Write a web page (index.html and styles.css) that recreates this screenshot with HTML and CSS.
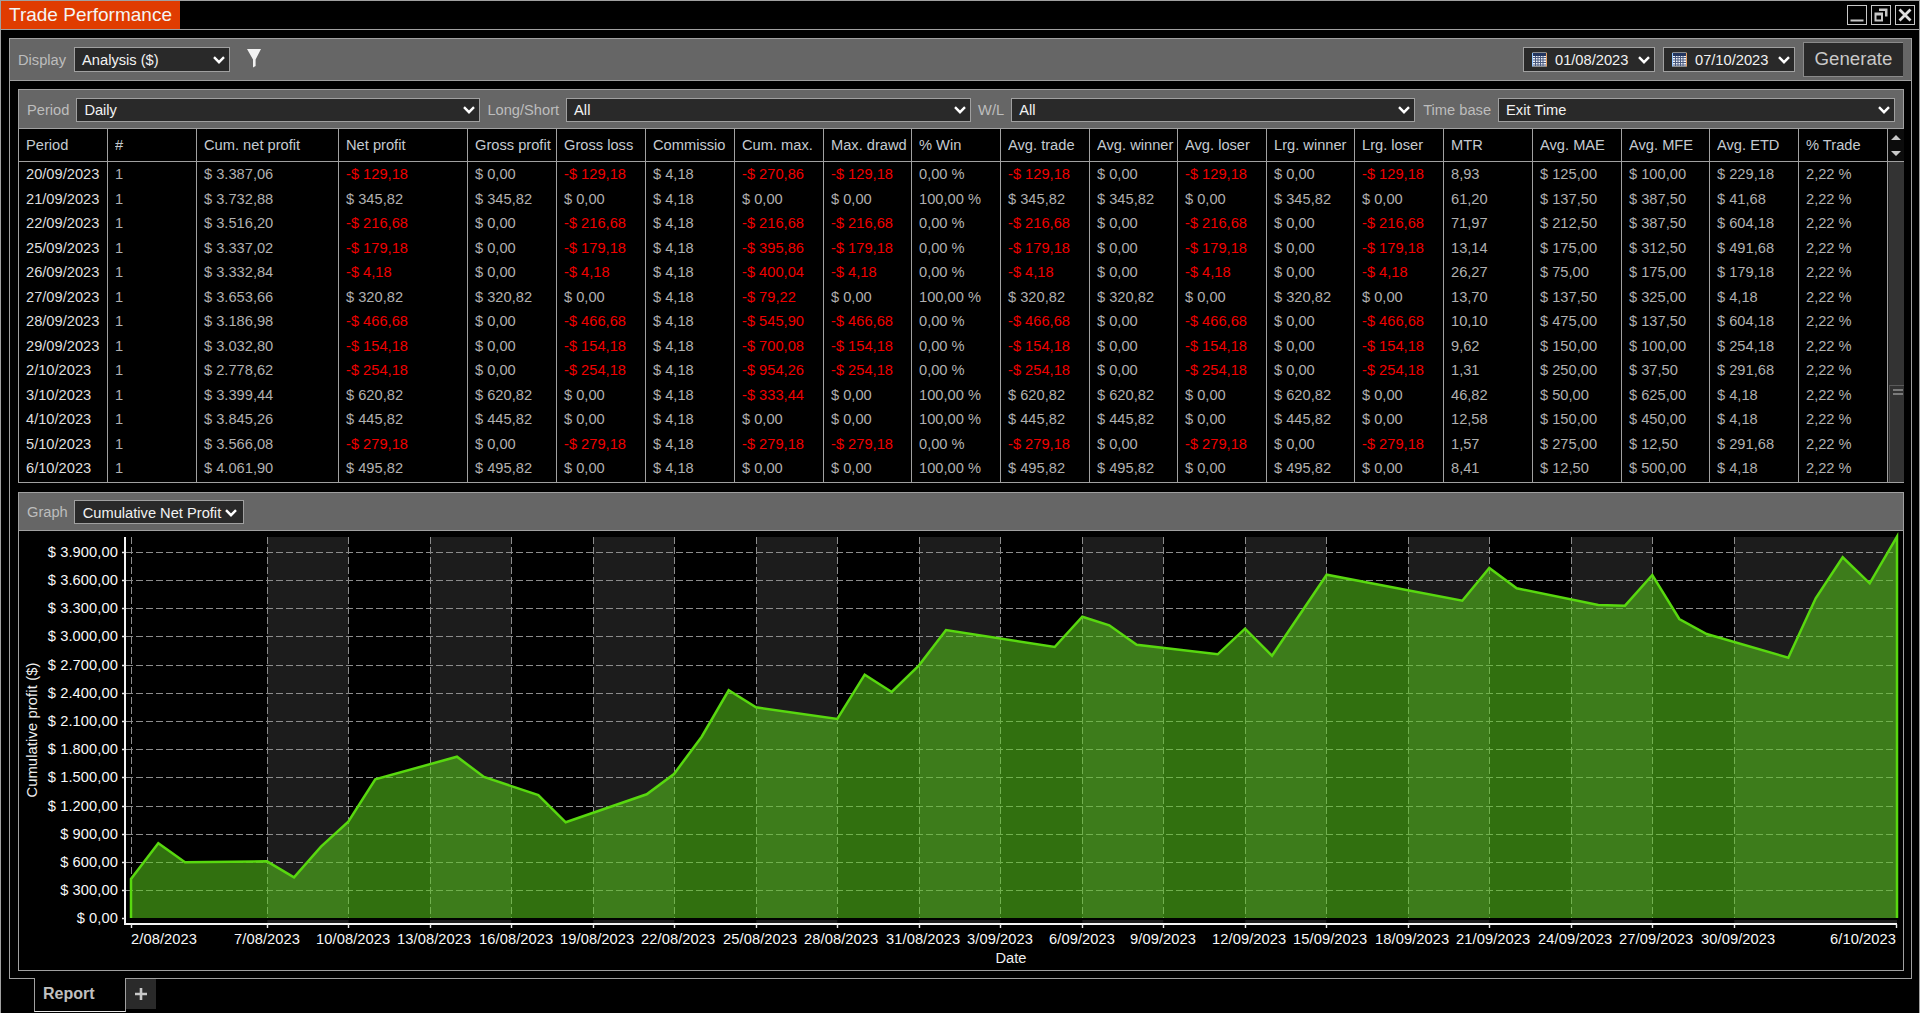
FILE: index.html
```html
<!DOCTYPE html>
<html lang="en">
<head>
<meta charset="utf-8">
<title>Trade Performance</title>
<link rel="stylesheet" href="styles.css">
</head>
<body>
<div class="window">
  <header class="titlebar">
    <div class="title">Trade Performance</div>
    <div class="winbtns">
      <span class="winbtn"><svg width="18" height="18" viewBox="0 0 18 18"><rect x="2.5" y="13.5" width="13" height="2" fill="#c8c8c8"/></svg></span>
      <span class="winbtn"><svg width="18" height="18" viewBox="0 0 18 18"><path d="M7 2.5h8.5v8H13V5H7z" fill="#c8c8c8"/><path fill-rule="evenodd" d="M2.5 6.5H11v9H2.5zM4.5 9.5v4H9v-4z" fill="#c8c8c8"/></svg></span>
      <span class="winbtn"><svg width="18" height="18" viewBox="0 0 18 18"><path d="M3.5 3.5l11 11M14.5 3.5l-11 11" stroke="#e0e0e0" stroke-width="2.8" fill="none"/></svg></span>
    </div>
  </header>
  <main class="outer">
    <div class="toolbar">
      <span class="lbl">Display</span>
      <div class="sel sel-display"><span>Analysis ($)</span><svg class="chev" viewBox="0 0 12 8"><path d="M1 1.2l5 5 5-5"/></svg></div>
      <svg class="funnel" width="16" height="20" viewBox="0 0 16 20"><path d="M1 1h14L9.6 11.5V18L7 19.5V11.5z" fill="#f2f2f2"/></svg>
      <div class="spacer"></div>
      <div class="sel sel-date">
        <svg class="cal" width="15" height="15" viewBox="0 0 15 15"><rect x=".5" y=".5" width="14" height="14" fill="#eef1f6"/><rect x="1" y="1" width="13" height="3" fill="#24365f"/><path d="M1 5.5h13M1 8h13M1 10.5h13M1 13h13M3.5 4v10M6 4v10M8.5 4v10M11 4v10" stroke="#4a5a80" stroke-width="1"/><path d="M.5 1v13.5" stroke="#8fc5ff"/><path d="M14.5 1v13.5" stroke="#e8a060"/></svg>
        <span>01/08/2023</span><svg class="chev" viewBox="0 0 12 8"><path d="M1 1.2l5 5 5-5"/></svg>
      </div>
      <div class="sel sel-date">
        <svg class="cal" width="15" height="15" viewBox="0 0 15 15"><rect x=".5" y=".5" width="14" height="14" fill="#eef1f6"/><rect x="1" y="1" width="13" height="3" fill="#24365f"/><path d="M1 5.5h13M1 8h13M1 10.5h13M1 13h13M3.5 4v10M6 4v10M8.5 4v10M11 4v10" stroke="#4a5a80" stroke-width="1"/><path d="M.5 1v13.5" stroke="#8fc5ff"/><path d="M14.5 1v13.5" stroke="#e8a060"/></svg>
        <span>07/10/2023</span><svg class="chev" viewBox="0 0 12 8"><path d="M1 1.2l5 5 5-5"/></svg>
      </div>
      <div class="generate">Generate</div>
    </div>
    <div class="content">
      <section class="panel panel-table">
        <div class="bar filterbar">
          <span class="lbl">Period</span>
          <div class="sel sel-f1"><span>Daily</span><svg class="chev" viewBox="0 0 12 8"><path d="M1 1.2l5 5 5-5"/></svg></div>
          <span class="lbl">Long/Short</span>
          <div class="sel sel-f2"><span>All</span><svg class="chev" viewBox="0 0 12 8"><path d="M1 1.2l5 5 5-5"/></svg></div>
          <span class="lbl">W/L</span>
          <div class="sel sel-f3"><span>All</span><svg class="chev" viewBox="0 0 12 8"><path d="M1 1.2l5 5 5-5"/></svg></div>
          <span class="lbl">Time base</span>
          <div class="sel sel-f4"><span>Exit Time</span><svg class="chev" viewBox="0 0 12 8"><path d="M1 1.2l5 5 5-5"/></svg></div>
        </div>
        <div class="tablewrap">
          <div class="grid">
            <div class="h"><span>Period</span></div><div class="h"><span>#</span></div><div class="h"><span>Cum. net profit</span></div><div class="h"><span>Net profit</span></div><div class="h"><span>Gross profit</span></div><div class="h"><span>Gross loss</span></div><div class="h"><span>Commissio</span></div><div class="h"><span>Cum. max.</span></div><div class="h"><span>Max. drawd</span></div><div class="h"><span>% Win</span></div><div class="h"><span>Avg. trade</span></div><div class="h"><span>Avg. winner</span></div><div class="h"><span>Avg. loser</span></div><div class="h"><span>Lrg. winner</span></div><div class="h"><span>Lrg. loser</span></div><div class="h"><span>MTR</span></div><div class="h"><span>Avg. MAE</span></div><div class="h"><span>Avg. MFE</span></div><div class="h"><span>Avg. ETD</span></div><div class="h"><span>% Trade</span></div>

            <div class="c d">20/09/2023</div><div class="c">1</div><div class="c">$ 3.387,06</div><div class="c n">-$ 129,18</div><div class="c">$ 0,00</div><div class="c n">-$ 129,18</div><div class="c">$ 4,18</div><div class="c n">-$ 270,86</div><div class="c n">-$ 129,18</div><div class="c">0,00 %</div><div class="c n">-$ 129,18</div><div class="c">$ 0,00</div><div class="c n">-$ 129,18</div><div class="c">$ 0,00</div><div class="c n">-$ 129,18</div><div class="c">8,93</div><div class="c">$ 125,00</div><div class="c">$ 100,00</div><div class="c">$ 229,18</div><div class="c">2,22 %</div>

            <div class="c d">21/09/2023</div><div class="c">1</div><div class="c">$ 3.732,88</div><div class="c">$ 345,82</div><div class="c">$ 345,82</div><div class="c">$ 0,00</div><div class="c">$ 4,18</div><div class="c">$ 0,00</div><div class="c">$ 0,00</div><div class="c">100,00 %</div><div class="c">$ 345,82</div><div class="c">$ 345,82</div><div class="c">$ 0,00</div><div class="c">$ 345,82</div><div class="c">$ 0,00</div><div class="c">61,20</div><div class="c">$ 137,50</div><div class="c">$ 387,50</div><div class="c">$ 41,68</div><div class="c">2,22 %</div>

            <div class="c d">22/09/2023</div><div class="c">1</div><div class="c">$ 3.516,20</div><div class="c n">-$ 216,68</div><div class="c">$ 0,00</div><div class="c n">-$ 216,68</div><div class="c">$ 4,18</div><div class="c n">-$ 216,68</div><div class="c n">-$ 216,68</div><div class="c">0,00 %</div><div class="c n">-$ 216,68</div><div class="c">$ 0,00</div><div class="c n">-$ 216,68</div><div class="c">$ 0,00</div><div class="c n">-$ 216,68</div><div class="c">71,97</div><div class="c">$ 212,50</div><div class="c">$ 387,50</div><div class="c">$ 604,18</div><div class="c">2,22 %</div>

            <div class="c d">25/09/2023</div><div class="c">1</div><div class="c">$ 3.337,02</div><div class="c n">-$ 179,18</div><div class="c">$ 0,00</div><div class="c n">-$ 179,18</div><div class="c">$ 4,18</div><div class="c n">-$ 395,86</div><div class="c n">-$ 179,18</div><div class="c">0,00 %</div><div class="c n">-$ 179,18</div><div class="c">$ 0,00</div><div class="c n">-$ 179,18</div><div class="c">$ 0,00</div><div class="c n">-$ 179,18</div><div class="c">13,14</div><div class="c">$ 175,00</div><div class="c">$ 312,50</div><div class="c">$ 491,68</div><div class="c">2,22 %</div>

            <div class="c d">26/09/2023</div><div class="c">1</div><div class="c">$ 3.332,84</div><div class="c n">-$ 4,18</div><div class="c">$ 0,00</div><div class="c n">-$ 4,18</div><div class="c">$ 4,18</div><div class="c n">-$ 400,04</div><div class="c n">-$ 4,18</div><div class="c">0,00 %</div><div class="c n">-$ 4,18</div><div class="c">$ 0,00</div><div class="c n">-$ 4,18</div><div class="c">$ 0,00</div><div class="c n">-$ 4,18</div><div class="c">26,27</div><div class="c">$ 75,00</div><div class="c">$ 175,00</div><div class="c">$ 179,18</div><div class="c">2,22 %</div>

            <div class="c d">27/09/2023</div><div class="c">1</div><div class="c">$ 3.653,66</div><div class="c">$ 320,82</div><div class="c">$ 320,82</div><div class="c">$ 0,00</div><div class="c">$ 4,18</div><div class="c n">-$ 79,22</div><div class="c">$ 0,00</div><div class="c">100,00 %</div><div class="c">$ 320,82</div><div class="c">$ 320,82</div><div class="c">$ 0,00</div><div class="c">$ 320,82</div><div class="c">$ 0,00</div><div class="c">13,70</div><div class="c">$ 137,50</div><div class="c">$ 325,00</div><div class="c">$ 4,18</div><div class="c">2,22 %</div>

            <div class="c d">28/09/2023</div><div class="c">1</div><div class="c">$ 3.186,98</div><div class="c n">-$ 466,68</div><div class="c">$ 0,00</div><div class="c n">-$ 466,68</div><div class="c">$ 4,18</div><div class="c n">-$ 545,90</div><div class="c n">-$ 466,68</div><div class="c">0,00 %</div><div class="c n">-$ 466,68</div><div class="c">$ 0,00</div><div class="c n">-$ 466,68</div><div class="c">$ 0,00</div><div class="c n">-$ 466,68</div><div class="c">10,10</div><div class="c">$ 475,00</div><div class="c">$ 137,50</div><div class="c">$ 604,18</div><div class="c">2,22 %</div>

            <div class="c d">29/09/2023</div><div class="c">1</div><div class="c">$ 3.032,80</div><div class="c n">-$ 154,18</div><div class="c">$ 0,00</div><div class="c n">-$ 154,18</div><div class="c">$ 4,18</div><div class="c n">-$ 700,08</div><div class="c n">-$ 154,18</div><div class="c">0,00 %</div><div class="c n">-$ 154,18</div><div class="c">$ 0,00</div><div class="c n">-$ 154,18</div><div class="c">$ 0,00</div><div class="c n">-$ 154,18</div><div class="c">9,62</div><div class="c">$ 150,00</div><div class="c">$ 100,00</div><div class="c">$ 254,18</div><div class="c">2,22 %</div>

            <div class="c d">2/10/2023</div><div class="c">1</div><div class="c">$ 2.778,62</div><div class="c n">-$ 254,18</div><div class="c">$ 0,00</div><div class="c n">-$ 254,18</div><div class="c">$ 4,18</div><div class="c n">-$ 954,26</div><div class="c n">-$ 254,18</div><div class="c">0,00 %</div><div class="c n">-$ 254,18</div><div class="c">$ 0,00</div><div class="c n">-$ 254,18</div><div class="c">$ 0,00</div><div class="c n">-$ 254,18</div><div class="c">1,31</div><div class="c">$ 250,00</div><div class="c">$ 37,50</div><div class="c">$ 291,68</div><div class="c">2,22 %</div>

            <div class="c d">3/10/2023</div><div class="c">1</div><div class="c">$ 3.399,44</div><div class="c">$ 620,82</div><div class="c">$ 620,82</div><div class="c">$ 0,00</div><div class="c">$ 4,18</div><div class="c n">-$ 333,44</div><div class="c">$ 0,00</div><div class="c">100,00 %</div><div class="c">$ 620,82</div><div class="c">$ 620,82</div><div class="c">$ 0,00</div><div class="c">$ 620,82</div><div class="c">$ 0,00</div><div class="c">46,82</div><div class="c">$ 50,00</div><div class="c">$ 625,00</div><div class="c">$ 4,18</div><div class="c">2,22 %</div>

            <div class="c d">4/10/2023</div><div class="c">1</div><div class="c">$ 3.845,26</div><div class="c">$ 445,82</div><div class="c">$ 445,82</div><div class="c">$ 0,00</div><div class="c">$ 4,18</div><div class="c">$ 0,00</div><div class="c">$ 0,00</div><div class="c">100,00 %</div><div class="c">$ 445,82</div><div class="c">$ 445,82</div><div class="c">$ 0,00</div><div class="c">$ 445,82</div><div class="c">$ 0,00</div><div class="c">12,58</div><div class="c">$ 150,00</div><div class="c">$ 450,00</div><div class="c">$ 4,18</div><div class="c">2,22 %</div>

            <div class="c d">5/10/2023</div><div class="c">1</div><div class="c">$ 3.566,08</div><div class="c n">-$ 279,18</div><div class="c">$ 0,00</div><div class="c n">-$ 279,18</div><div class="c">$ 4,18</div><div class="c n">-$ 279,18</div><div class="c n">-$ 279,18</div><div class="c">0,00 %</div><div class="c n">-$ 279,18</div><div class="c">$ 0,00</div><div class="c n">-$ 279,18</div><div class="c">$ 0,00</div><div class="c n">-$ 279,18</div><div class="c">1,57</div><div class="c">$ 275,00</div><div class="c">$ 12,50</div><div class="c">$ 291,68</div><div class="c">2,22 %</div>

            <div class="c d">6/10/2023</div><div class="c">1</div><div class="c">$ 4.061,90</div><div class="c">$ 495,82</div><div class="c">$ 495,82</div><div class="c">$ 0,00</div><div class="c">$ 4,18</div><div class="c">$ 0,00</div><div class="c">$ 0,00</div><div class="c">100,00 %</div><div class="c">$ 495,82</div><div class="c">$ 495,82</div><div class="c">$ 0,00</div><div class="c">$ 495,82</div><div class="c">$ 0,00</div><div class="c">8,41</div><div class="c">$ 12,50</div><div class="c">$ 500,00</div><div class="c">$ 4,18</div><div class="c">2,22 %</div>
          </div>
          <div class="scroll">
            <div class="scroll-btns">
              <svg width="16" height="32" viewBox="0 0 16 32"><path d="M3 11l5-5 5 5zM3 22h10l-5 5z" fill="#c8c8c8"/></svg>
            </div>
            <div class="scroll-track"><div class="scroll-thumb"><i></i><i></i></div></div>
          </div>
        </div>
      </section>
      <section class="panel panel-graph">
        <div class="bar graphbar">
          <span class="lbl">Graph</span>
          <div class="sel sel-graph"><span>Cumulative Net Profit</span><svg class="chev" viewBox="0 0 12 8"><path d="M1 1.2l5 5 5-5"/></svg></div>
        </div>
        <svg class="chart" width="1884" height="439" viewBox="19 531 1884 439">
          <g class="bands">
            <rect x="267.3" y="537" width="81.2" height="386"/><rect x="430" y="537" width="81.3" height="386"/><rect x="593.3" y="537" width="81" height="386"/><rect x="756.3" y="537" width="81" height="386"/><rect x="919.3" y="537" width="81" height="386"/><rect x="1082.3" y="537" width="81" height="386"/><rect x="1245.3" y="537" width="81" height="386"/><rect x="1408.3" y="537" width="81" height="386"/><rect x="1571.3" y="537" width="81" height="386"/><rect x="1734.3" y="537" width="162.7" height="386"/>
          </g>
          <path class="gridl" d="M126 552.5H1897M126 580.5H1897M126 608.5H1897M126 636.5H1897M126 665.5H1897M126 693.5H1897M126 721.5H1897M126 749.5H1897M126 777.5H1897M126 806.5H1897M126 834.5H1897M126 862.5H1897M126 890.5H1897"/>
          <path class="gridl" d="M131.5 537V918M267.5 537V918M348.5 537V918M430.5 537V918M511.5 537V918M593.5 537V918M674.5 537V918M756.5 537V918M837.5 537V918M919.5 537V918M1000.5 537V918M1082.5 537V918M1163.5 537V918M1245.5 537V918M1326.5 537V918M1408.5 537V918M1489.5 537V918M1571.5 537V918M1652.5 537V918M1734.5 537V918"/>
          <rect class="gap" x="130" y="918" width="1767" height="2"/>
          <polygon class="fill" points="131,918 131,879 158.3,843.3 185,862.3 267,861.3 294,877.3 321,846.7 348.3,821.7 375.3,779.3 457,756.7 484,777 538.3,795 565.7,822.3 646.7,794.3 674,774 701.7,736.7 728.7,690.3 756,707.3 837.3,719 864.7,674.7 891.7,692 919,665.3 946,630 1054.7,647 1082.3,616.7 1109.3,625.3 1136.7,644.7 1217.7,654.3 1245,628.7 1272,655.7 1326.7,574.7 1462.3,600.7 1489.3,568 1516.7,588.3 1598.3,605 1625,605.7 1652.3,575 1679.3,619 1706.7,634 1788.3,657.7 1815.7,598.3 1842.7,557.3 1869.7,583.3 1897,536.7 1897,918"/>
          <polyline class="line" points="131,918 131,879 158.3,843.3 185,862.3 267,861.3 294,877.3 321,846.7 348.3,821.7 375.3,779.3 457,756.7 484,777 538.3,795 565.7,822.3 646.7,794.3 674,774 701.7,736.7 728.7,690.3 756,707.3 837.3,719 864.7,674.7 891.7,692 919,665.3 946,630 1054.7,647 1082.3,616.7 1109.3,625.3 1136.7,644.7 1217.7,654.3 1245,628.7 1272,655.7 1326.7,574.7 1462.3,600.7 1489.3,568 1516.7,588.3 1598.3,605 1625,605.7 1652.3,575 1679.3,619 1706.7,634 1788.3,657.7 1815.7,598.3 1842.7,557.3 1869.7,583.3 1897,536.7 1897,918"/>
          <path class="axis" d="M125 537V924H1897"/>
          <path class="tick" d="M122 552.5h3M122 580.5h3M122 608.5h3M122 636.5h3M122 665.5h3M122 693.5h3M122 721.5h3M122 749.5h3M122 777.5h3M122 806.5h3M122 834.5h3M122 862.5h3M122 890.5h3M122 918.5h3"/>
          <path class="tick" d="M131.5 924v4M267.5 924v4M348.5 924v4M430.5 924v4M511.5 924v4M593.5 924v4M674.5 924v4M756.5 924v4M837.5 924v4M919.5 924v4M1000.5 924v4M1082.5 924v4M1163.5 924v4M1245.5 924v4M1326.5 924v4M1408.5 924v4M1489.5 924v4M1571.5 924v4M1652.5 924v4M1734.5 924v4M1896.5 924v4"/>
          <g class="ylab">
            <text x="118" y="557">$ 3.900,00</text><text x="118" y="585">$ 3.600,00</text><text x="118" y="613">$ 3.300,00</text><text x="118" y="641">$ 3.000,00</text><text x="118" y="670">$ 2.700,00</text><text x="118" y="698">$ 2.400,00</text><text x="118" y="726">$ 2.100,00</text><text x="118" y="754">$ 1.800,00</text><text x="118" y="782">$ 1.500,00</text><text x="118" y="811">$ 1.200,00</text><text x="118" y="839">$ 900,00</text><text x="118" y="867">$ 600,00</text><text x="118" y="895">$ 300,00</text><text x="118" y="923">$ 0,00</text>
          </g>
          <g class="xlab">
            <text x="131" y="944">2/08/2023</text><text x="234" y="944">7/08/2023</text><text x="316" y="944">10/08/2023</text><text x="397" y="944">13/08/2023</text><text x="479" y="944">16/08/2023</text><text x="560" y="944">19/08/2023</text><text x="641" y="944">22/08/2023</text><text x="723" y="944">25/08/2023</text><text x="804" y="944">28/08/2023</text><text x="886" y="944">31/08/2023</text><text x="967" y="944">3/09/2023</text><text x="1049" y="944">6/09/2023</text><text x="1130" y="944">9/09/2023</text><text x="1212" y="944">12/09/2023</text><text x="1293" y="944">15/09/2023</text><text x="1375" y="944">18/09/2023</text><text x="1456" y="944">21/09/2023</text><text x="1538" y="944">24/09/2023</text><text x="1619" y="944">27/09/2023</text><text x="1701" y="944">30/09/2023</text><text x="1830" y="944">6/10/2023</text>
          </g>
          <text class="title-x" x="1011" y="963">Date</text>
          <text class="title-y" transform="translate(37 730) rotate(-90)">Cumulative profit ($)</text>
        </svg>
      </section>
    </div>
  </main>
  <footer class="tabs">
    <div class="tab">Report</div>
    <div class="addtab"><svg width="14" height="14" viewBox="0 0 14 14"><path d="M7 1v12M1 7h12" stroke="#c8c8c8" stroke-width="2.6"/></svg></div>
  </footer>
</div>
</body>
</html>
```
FILE: styles.css
```css
* { box-sizing: border-box; }
html, body { margin: 0; padding: 0; background: #000; }
body { font-family: "Liberation Sans", Arial, sans-serif; font-size: 14.67px; color: #ddd; overflow: hidden; }

.window { width: 1920px; height: 1013px; border: 1px solid #a0a0a0; border-bottom: 0; display: flex; flex-direction: column; }

.titlebar { height: 29px; flex: none; border-bottom: 1px solid #a0a0a0; display: flex; justify-content: space-between; }
.title { width: 179px; height: 28px; background: #e03c00; color: #f4f4f4; font-size: 19px; line-height: 27px; padding-left: 8px; white-space: nowrap; }
.winbtns { display: flex; gap: 4px; padding: 4px 4px 0 0; }
.winbtn { width: 20px; height: 20px; border: 1px solid #c8c8c8; display: block; }
.winbtn svg { display: block; }

.outer { width: 1903px; height: 941px; flex: none; margin: 8px 0 0 8px; border: 1px solid #a0a0a0; display: flex; flex-direction: column; }

.toolbar { height: 42px; flex: none; background: #666; border-bottom: 1px solid #a0a0a0; display: flex; align-items: center; padding: 0 8px 0 8px; }
.lbl { color: #bdbdbd; white-space: nowrap; line-height: 18px; }
.spacer { flex: 1; }

.sel { height: 25px; background: #292929; border: 1px solid #a0a0a0; color: #f2f2f2; display: flex; align-items: center; padding: 0 4px 0 7px; white-space: nowrap; flex: none; }
.sel span { flex: 1; }
.chev { width: 12px; height: 8px; flex: none; }
.chev path { fill: none; stroke: #fff; stroke-width: 2.4; }

.sel-display { width: 156px; margin-left: 8px; }
.funnel { margin: -4px 0 0 16px; }
.sel-date { width: 132px; margin-right: 8px; padding-left: 8px; }
.sel-date .cal { margin-right: 8px; flex: none; }
.generate { width: 100px; height: 35px; background: #292929; border: 1px solid #8a8a8a; border-right: 0; color: #c8c8c8; font-size: 18.67px; text-align: center; line-height: 32px; }

.content { flex: 1; padding: 8px 7px 7px 8px; display: flex; flex-direction: column; gap: 9px; }
.panel { border: 1px solid #a0a0a0; display: flex; flex-direction: column; flex: none; }
.panel-table { height: 394px; }
.panel-graph { height: 479px; }

.bar { background: #666; border-bottom: 1px solid #a0a0a0; display: flex; align-items: center; flex: none; }
.filterbar { height: 39px; padding: 1px 0 0 8px; }
.filterbar .sel { height: 24px; padding-top: 1px; margin: 0 7px 0 7px; }
.sel-f1 { width: 404px; }
.sel-f2 { width: 405px; }
.filterbar .sel-f3 { width: 404px; margin-right: 8px; }
.sel-f4 { width: 397px; }
.graphbar { height: 38px; padding-left: 8px; }
.sel-graph { width: 170px; height: 24px; margin-left: 6px; padding: 2px 6px 0 8px; }

.tablewrap { display: flex; flex: 1; min-height: 0; }
.grid { width: 1869px; flex: none; display: grid; grid-template-columns: 89px 89px 142px 129px 89px 89px 89px 89px 88px 89px 89px 88px 89px 88px 89px 89px 89px 88px 89px 89px; grid-template-rows: 33px repeat(12, 24.5px) 1fr; }
.h { border-right: 1px solid #a0a0a0; border-bottom: 1px solid #a0a0a0; color: #c4cad0; padding: 0 0 0 7px; line-height: 32px; }
.h span { display: block; overflow: hidden; white-space: nowrap; }
.c { border-right: 1px solid #a0a0a0; color: #b0b0b0; padding-left: 7px; line-height: 25px; white-space: nowrap; overflow: hidden; }
.c.d { color: #dedede; }
.c.n { color: #f00000; }

.scroll { flex: 1; display: flex; flex-direction: column; }
.scroll-btns { height: 33px; background: #0c0c0c; border-bottom: 1px solid #a0a0a0; }
.scroll-btns svg { display: block; }
.scroll-track { flex: 1; background: #333; border-left: 1px solid #222; display: flex; flex-direction: column; justify-content: flex-end; }
.scroll-thumb { height: 97px; background: #333; border-top: 1px solid #5a5a5a; border-left: 1px solid #505050; padding: 3px 1px 0 3px; }
.scroll-thumb i { display: block; height: 2px; background: #7a7a7a; margin-bottom: 2px; }

.chart { display: block; flex: none; background: #000; font-family: "Liberation Sans", Arial, sans-serif; font-size: 14.67px; }
.bands rect { fill: #1c1c1c; }
.gridl { fill: none; stroke: #8c8c8c; stroke-width: 1; stroke-dasharray: 7 3; }
.gap { fill: #000; }
.fill { fill: rgba(91, 207, 28, 0.54); }
.line { fill: none; stroke: #58d80f; stroke-width: 2.5; stroke-linejoin: miter; }
.axis { fill: none; stroke: #f4f4f4; stroke-width: 2; }
.tick { fill: none; stroke: #e8e8e8; stroke-width: 1.4; }
.ylab text { fill: #f8f8f8; text-anchor: end; letter-spacing: 0.1px; }
.xlab text { fill: #f8f8f8; letter-spacing: 0.1px; }
.title-x { fill: #f0f0f0; text-anchor: middle; }
.title-y { fill: #f0f0f0; text-anchor: middle; letter-spacing: 0.15px; }

.tabs { flex: 1; display: flex; align-items: flex-start; padding-left: 33px; margin-top: -1px; position: relative; }
.tab { width: 92px; height: 34px; background: #000; border: 1px solid #a0a0a0; border-top: 0; border-bottom-color: #e8e8e8; color: #c0c0c0; font-weight: 700; font-size: 16px; line-height: 31px; padding-left: 8px; }
.addtab { width: 30px; height: 30px; margin-top: 1px; background: #2a2a2a; display: flex; align-items: center; justify-content: center; }
```
